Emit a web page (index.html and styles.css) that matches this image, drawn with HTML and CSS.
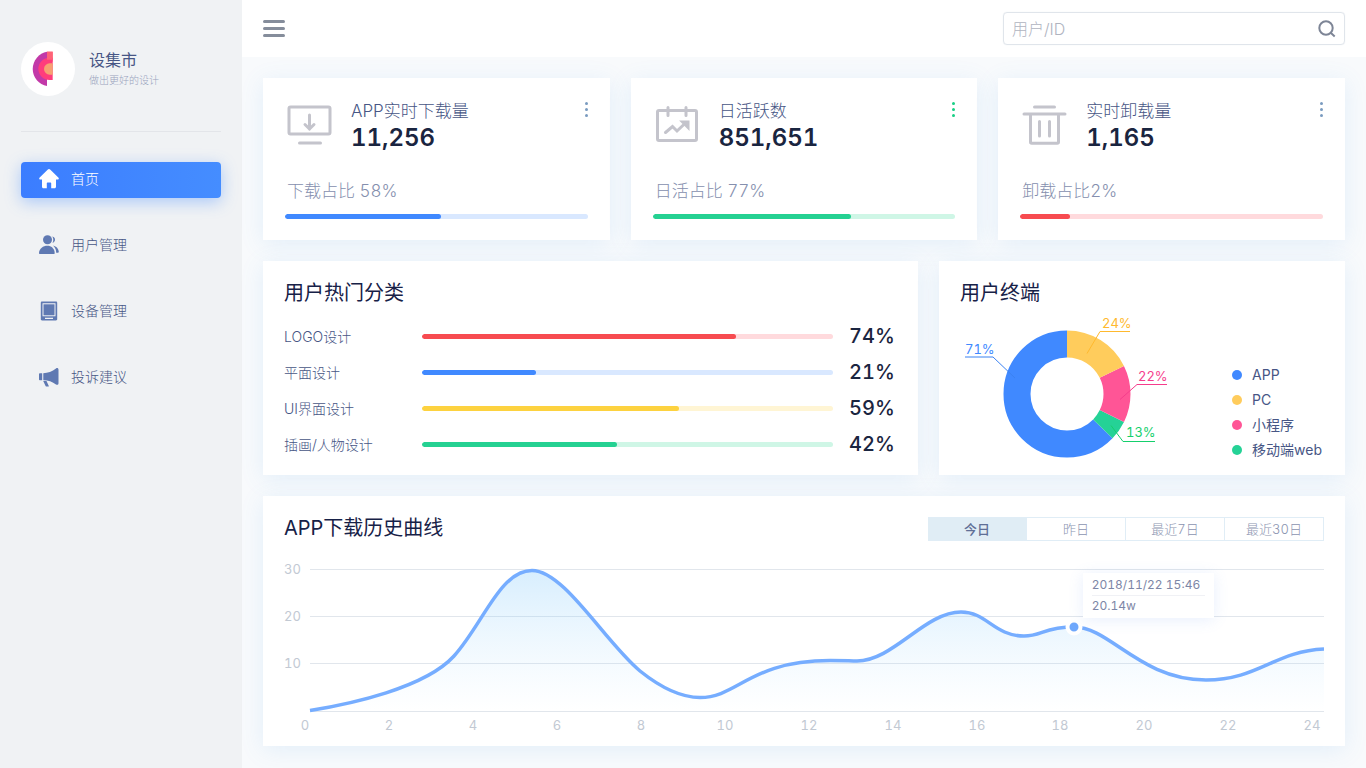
FILE: index.html
```html
<!DOCTYPE html>
<html lang="zh-CN">
<head>
<meta charset="utf-8">
<title>设集市</title>
<link rel="stylesheet" href="styles.css">
</head>
<body>
<div class="app">
  <aside class="sidebar">
    <div class="profile">
      <span class="avatar">
        <svg width="54" height="54" viewBox="0 0 54 54" aria-hidden="true">
          <path d="M26 9.700C18 11 11.700 18.500 11.700 27S18 42.700 26 44z" fill="#c239a8"/>
          <path d="M26 9.700h5.700v10H26z" fill="#ff6377"/>
          <path d="M31.700 15.700H28.500a11.150 11.150 0 0 0 0 22.300h3.200z" fill="#ff3d7c"/>
          <path d="M26 9.700h5.700v8H26z" fill="#ff6377"/>
          <path d="M31.700 21.300h-3a5.700 5.700 0 0 0 0 11.400h3z" fill="#f7a072"/>
        </svg>
      </span>
      <div>
        <h1 class="profile-name">设集市</h1>
        <p class="profile-note">做出更好的设计</p>
      </div>
    </div>
    <nav class="nav">
      <a class="nav-item nav-item-active" href="#home">
        <svg class="nav-icon" viewBox="0 0 20 20" aria-hidden="true"><path d="M8.600.8a2 2 0 0 1 2.800 0l7.900 7.600c.9.900.5 2.100-.6 2.100H17v7.200c0 .9-.6 1.500-1.500 1.500h-3.300v-4.700c0-.6-.4-1-1-1H8.800c-.6 0-1 .4-1 1v4.700H4.500c-.9 0-1.500-.6-1.500-1.500v-7.200H1.300c-1.100 0-1.500-1.200-.6-2.100z"/></svg>
        首页
      </a>
      <a class="nav-item" href="#users">
        <svg class="nav-icon" viewBox="0 0 20 20" aria-hidden="true"><circle cx="8.500" cy="4.800" r="4.500"/><path d="M1 19c-.7 0-1-.5-1-1.100C.3 13.500 4 10.800 8.500 10.800c3.500 0 7 2.600 7.200 7.100 0 .7-.3 1.100-1 1.100z"/><path d="M13.300 1.500c1.900.3 2.900 1.800 2.700 3.600-.2 1.500-1.100 2.500-2.500 2.800 1.100-1.900 1.100-4.300-.2-6.400zM14 10.500c3.300.8 5.700 3.300 5.800 6.300 0 .6-.3.900-.9.900h-1.700c0-2.900-1.100-5.400-3.200-7.200z"/></svg>
        用户管理
      </a>
      <a class="nav-item" href="#devices">
        <svg class="nav-icon" viewBox="0 0 20 20" aria-hidden="true"><path fill-rule="evenodd" d="M3 .5h14c.7 0 1.200.5 1.200 1.200v16.600c0 .7-.5 1.200-1.200 1.200H3c-.7 0-1.200-.5-1.200-1.200V1.700C1.800 1 2.300.5 3 .5zM3.500 2.300v13h13v-13zM6 16.800v1.300h8v-1.300z"/><path d="M4.500 3.300h11v11h-11z"/></svg>
        设备管理
      </a>
      <a class="nav-item" href="#feedback">
        <svg class="nav-icon" viewBox="0 0 20 20" aria-hidden="true"><path d="M.8 6.300h2.400v6.900H.8c-.4 0-.8-.4-.8-.8V7.100c0-.4.400-.8.800-.8zM4.300 6.200c4.500-.2 8.900-1.500 12.700-4.700 1.100-.9 2.500-.3 2.500 1.200v13.500c0 1.500-1.400 2-2.500 1.200-3.500-2.800-7.800-4.100-12.700-4.200zM4.200 14.100h3.300l2.300 4.800c.1.300 0 .6-.4.600H7.600c-.5 0-.8-.2-1-.6z"/></svg>
        投诉建议
      </a>
    </nav>
  </aside>

  <div class="page">
    <header class="topbar">
      <button class="menu-button" type="button" aria-label="菜单"><span></span><span></span><span></span></button>
      <form class="search">
        <input class="search-input" type="search" placeholder="用户/ID" aria-label="用户/ID">
        <button class="search-button" type="submit" aria-label="搜索">
          <svg width="18" height="18" viewBox="0 0 18 18" fill="none" stroke="#7d8596" stroke-width="2" aria-hidden="true"><circle cx="8" cy="8" r="6.700"/><path d="M12.700 12.700l4 3.800"/></svg>
        </button>
      </form>
    </header>

    <main class="content">
      <section class="stats">
        <article class="card stat stat-blue">
          <div class="stat-head">
            <svg class="stat-icon" viewBox="0 0 46 44" aria-hidden="true"><rect x="2" y="5" width="41" height="27" rx="1.500"/><path d="M22.500 13v14M18 22.500l4.500 4.500 4.500-4.500M12.500 41h21"/></svg>
            <div class="stat-text"><h2 class="stat-title">APP实时下载量</h2><p class="stat-value">11,256</p></div>
            <button class="more" type="button" aria-label="更多"><i></i><i></i><i></i></button>
          </div>
          <p class="stat-share">下载占比 58%</p>
          <div class="bar"><div class="bar-fill" style="width:51.5%"></div></div>
        </article>
        <article class="card stat stat-green">
          <div class="stat-head">
            <svg class="stat-icon" viewBox="0 0 46 44" aria-hidden="true"><rect x="2.500" y="8.500" width="39" height="30" rx="1.500"/><path d="M13 5.500v8M31 5.500v8M10.500 30.500l7-6 4.500 4.500 9-8.500"/><path d="M26.500 19.500h7v7z" fill="#c4c4cc" stroke-width="2"/></svg>
            <div class="stat-text"><h2 class="stat-title">日活跃数</h2><p class="stat-value">851,651</p></div>
            <button class="more more-green" type="button" aria-label="更多"><i></i><i></i><i></i></button>
          </div>
          <p class="stat-share">日活占比 77%</p>
          <div class="bar"><div class="bar-fill" style="width:65.6%"></div></div>
        </article>
        <article class="card stat stat-red">
          <div class="stat-head">
            <svg class="stat-icon" viewBox="0 0 46 44" aria-hidden="true"><path d="M12.500 5h20M2 12h41M8.500 12v28c0 .8.400 1.200 1.200 1.200h25.600c.8 0 1.200-.4 1.200-1.200V12M17.500 19.500v14.500M27.500 19.500v14.500"/></svg>
            <div class="stat-text"><h2 class="stat-title">实时卸载量</h2><p class="stat-value">1,165</p></div>
            <button class="more" type="button" aria-label="更多"><i></i><i></i><i></i></button>
          </div>
          <p class="stat-share">卸载占比2%</p>
          <div class="bar"><div class="bar-fill" style="width:16.4%"></div></div>
        </article>
      </section>

      <section class="middle">
        <article class="card panel">
          <h2 class="card-title">用户热门分类</h2>
          <ul class="ranks">
            <li class="rank rank-red"><span>LOGO设计</span><div class="bar"><div class="bar-fill" style="width:76.3%"></div></div><b>74%</b></li>
            <li class="rank rank-blue"><span>平面设计</span><div class="bar"><div class="bar-fill" style="width:27.7%"></div></div><b>21%</b></li>
            <li class="rank rank-yellow"><span>UI界面设计</span><div class="bar"><div class="bar-fill" style="width:62.5%"></div></div><b>59%</b></li>
            <li class="rank rank-green"><span>插画/人物设计</span><div class="bar"><div class="bar-fill" style="width:47.5%"></div></div><b>42%</b></li>
          </ul>
        </article>
        <article class="card panel">
          <h2 class="card-title">用户终端</h2>
          <div class="terminals">
            <svg class="donut" viewBox="0 0 210 150" role="img" aria-label="用户终端">
              <g class="donut-ring" transform="rotate(-90 107 82)">
                <circle cx="107" cy="82" r="50" pathLength="360" stroke="#4089ff" stroke-dasharray="225.800 360" stroke-dashoffset="-134.200"/>
                <circle cx="107" cy="82" r="50" pathLength="360" stroke="#25d296" stroke-dasharray="18 360" stroke-dashoffset="-116.200"/>
                <circle cx="107" cy="82" r="50" pathLength="360" stroke="#ff5596" stroke-dasharray="52.500 360" stroke-dashoffset="-63.700"/>
                <circle cx="107" cy="82" r="50" pathLength="360" stroke="#ffcc5c" stroke-dasharray="63.700 360"/>
              </g>
              <g class="donut-lead">
                <path d="M5 45h28l22 21" stroke="#3b82f2"/>
                <path d="M170 19.500h-30l-13 22" stroke="#ffb92e"/>
                <path d="M207 72.500h-30l-17 15" stroke="#f53d8c"/>
                <path d="M195 129.500h-32l-12-16" stroke="#15cf6c"/>
              </g>
              <g class="donut-label">
                <text x="5" y="42" fill="#4089ff">71%</text>
                <text x="142" y="16" fill="#ffb92e">24%</text>
                <text x="178" y="69" fill="#f53d8c">22%</text>
                <text x="166" y="125" fill="#15cf6c">13%</text>
              </g>
            </svg>
            <ul class="legend">
              <li class="legend-blue">APP</li>
              <li class="legend-yellow">PC</li>
              <li class="legend-pink">小程序</li>
              <li class="legend-green">移动端web</li>
            </ul>
          </div>
        </article>
      </section>

      <section class="card panel history">
        <div class="history-head">
          <h2 class="card-title">APP下载历史曲线</h2>
          <div class="tabs">
            <button class="tab tab-active" type="button">今日</button>
            <button class="tab" type="button">昨日</button>
            <button class="tab" type="button">最近7日</button>
            <button class="tab" type="button">最近30日</button>
          </div>
        </div>
        <div class="chart">
          <svg class="chart-svg" viewBox="0 0 1040 180" role="img" aria-label="APP下载历史曲线">
            <defs><linearGradient id="area" x1="0" y1="0" x2="0" y2="1"><stop offset="0" stop-color="#7cc6fb" stop-opacity=".3"/><stop offset="1" stop-color="#a9dbfc" stop-opacity="0"/></linearGradient></defs>
            <path class="grid" d="M26 9.500h1014M26 56.500h1014M26 103.500h1014M26 151.500h1014"/>
            <path fill="url(#area)" d="M26 150.500C66 144 141 128 170 96S216 10.500 248 10.500 321 82 356 111C376 127 396 137.500 416 137.500 454 137.500 466 100.500 546 100.500 561 100.500 566 101 573 101 609 101 641 52 677 52 703 52 710 76 740 76 758 76 760 67 790 67 826 67 856 120 922 120 974 120 991 91 1040 89V151H26z"/>
            <path class="curve" d="M26 150.500C66 144 141 128 170 96S216 10.500 248 10.500 321 82 356 111C376 127 396 137.500 416 137.500 454 137.500 466 100.500 546 100.500 561 100.500 566 101 573 101 609 101 641 52 677 52 703 52 710 76 740 76 758 76 760 67 790 67 826 67 856 120 922 120 974 120 991 91 1040 89"/>
            <circle cx="790" cy="67" r="6.500" fill="#6fa8fc" stroke="#fff" stroke-width="4"/>
            <g class="axis">
              <text x="0" y="14">30</text><text x="0" y="61">20</text><text x="0" y="108">10</text>
            </g>
            <g class="axis axis-x">
              <text x="21" y="170">0</text><text x="105" y="170">2</text><text x="189" y="170">4</text><text x="273" y="170">6</text><text x="357" y="170">8</text><text x="441" y="170">10</text><text x="525" y="170">12</text><text x="609" y="170">14</text><text x="693" y="170">16</text><text x="776" y="170">18</text><text x="860" y="170">20</text><text x="944" y="170">22</text><text x="1028" y="170">24</text>
            </g>
          </svg>
          <div class="tooltip"><p class="tooltip-time">2018/11/22 15:46</p><p>20.14w</p></div>
        </div>
      </section>
    </main>
  </div>
</div>
</body>
</html>
```
FILE: styles.css
```css
* { box-sizing: border-box; margin: 0; padding: 0; }
body { font-family: Inter, "Noto Sans CJK SC", sans-serif; font-weight: 300; font-variant-numeric: tabular-nums; color: #475685; background: #f8fafc; }
h1, h2 { font-weight: inherit; }
ul { list-style: none; }
a { text-decoration: none; color: inherit; }
button, input { font: inherit; color: inherit; border: 0; background: none; }
button { cursor: pointer; }

.app { display: flex; min-height: 100vh; }

.sidebar { flex: none; width: 242px; padding: 42px 21px; background: #f0f2f4; }
.profile { display: flex; align-items: center; gap: 14px; padding-bottom: 35px; border-bottom: 1px solid #e3e5e9; }
.avatar { width: 54px; height: 54px; border-radius: 50%; background: #fff; }
.avatar svg { display: block; }
.profile-name { font-size: 16px; line-height: 22px; font-weight: 400; }
.profile-note { font-size: 10px; line-height: 18px; color: #99a3bd; }
.nav { display: flex; flex-direction: column; gap: 30px; margin-top: 30px; }
.nav-item { display: flex; align-items: center; gap: 12px; height: 36px; padding: 0 18px 2px; border-radius: 4px; font-size: 14px; line-height: 20px; }
.nav-item-active { color: #fff; background: linear-gradient(90deg, #3b7dff, #458dff); box-shadow: 0 4px 16px rgba(64, 137, 255, .4); }
.nav-icon { width: 20px; height: 20px; fill: #5f79b2; }
.nav-item-active .nav-icon { fill: #fff; }

.page { flex: 1; min-width: 0; }
.topbar { display: flex; justify-content: space-between; align-items: center; height: 57px; padding: 0 21px; background: #fff; }
.menu-button { display: flex; flex-direction: column; gap: 4px; width: 22px; }
.menu-button span { height: 3px; border-radius: 2px; background: #858d9b; }
.search { display: flex; align-items: center; width: 342px; height: 33px; border: 1px solid #e0e5eb; border-radius: 4px; box-shadow: 0 0 1px #e0e5eb; }
.search-input { flex: 1; min-width: 0; padding: 0 8px; font-size: 16px; outline: 0; }
.search-input::placeholder { color: #b0b4bf; opacity: 1; }
.search-button { display: flex; padding: 0 8px; }

.content { display: grid; gap: 21px; padding: 21px; }
.card { background: #fff; box-shadow: 0 4px 22px rgba(85, 160, 235, .13); }
.stats { display: grid; grid-template-columns: repeat(3, 1fr); gap: 21px; }
.stat { padding: 21px 22px; }
.stat-head { display: flex; align-items: flex-start; }
.stat-icon { flex: none; width: 46px; height: 44px; margin: 3px 0 0 2px; fill: none; stroke: #c4c4cc; stroke-width: 3; stroke-linecap: round; }
.stat-text { flex: 1; padding-left: 18px; }
.stat-title { font-size: 17px; line-height: 24px; }
.stat-value { font-size: 24px; line-height: 30px; font-weight: 600; color: #1a2540; }
.more { display: flex; flex-direction: column; gap: 3px; padding-top: 3px; }
.more i { width: 3px; height: 3px; border-radius: 50%; background: #7a9bc0; }
.more-green i { background: #18cf85; }
.stat-share { margin-top: 25px; padding-left: 2px; font-size: 17px; line-height: 26px; color: #858fae; }
.bar { height: 5px; border-radius: 3px; overflow: hidden; }
.bar-fill { height: 5px; border-radius: 3px; }
.stat .bar { margin-top: 10px; }
.stat-blue .bar, .rank-blue .bar { background: #d9e8ff; }
.stat-blue .bar-fill, .rank-blue .bar-fill { background: #4089ff; }
.stat-green .bar, .rank-green .bar { background: #cff6e6; }
.stat-green .bar-fill, .rank-green .bar-fill { background: #25d192; }
.stat-red .bar, .rank-red .bar { background: #ffdadd; }
.stat-red .bar-fill, .rank-red .bar-fill { background: #f74b50; }
.rank-yellow .bar { background: #fff5d4; }
.rank-yellow .bar-fill { background: #fdd23f; }

.middle { display: grid; grid-template-columns: 655fr 406fr; gap: 21px; }
.panel { padding: 16px 21px 13px; }
.card-title { font-size: 20px; line-height: 32px; font-weight: 400; color: #172147; }
.ranks { padding: 9px 4px 0 0; }
.rank { display: grid; grid-template-columns: 138px 1fr 60px; align-items: center; height: 36px; font-size: 14px; }
.rank b { padding-left: 16px; font-size: 20px; font-weight: 500; color: #1a2540; }
.terminals { display: flex; justify-content: space-between; align-items: flex-end; padding-top: 3px; }
.donut { width: 210px; height: 150px; }
.donut-ring { fill: none; stroke-width: 27; }
.donut-lead { fill: none; stroke-width: 1; }
.donut-label { font-size: 13px; font-weight: 400; }
.legend { padding-right: 2px; font-size: 14px; line-height: 25px; font-weight: 400; }
.legend li { display: flex; align-items: center; gap: 10px; }
.legend li::before { content: ""; width: 10px; height: 10px; border-radius: 50%; background: currentColor; }
.legend-blue::before { color: #4089ff; }
.legend-yellow::before { color: #ffcc5c; }
.legend-pink::before { color: #ff5596; }
.legend-green::before { color: #25d296; }

.history { padding-bottom: 6px; }
.history-head { display: flex; justify-content: space-between; align-items: center; }
.tabs { display: flex; margin-top: 2px; }
.tab { width: 99px; height: 24px; border: 1px solid #e0edf6; border-left-width: 0; font-size: 13px; line-height: 20px; color: #8b94b0; }
.tab-active { background: #e0edf5; color: #5f6f96; font-weight: 500; }
.chart { position: relative; margin-top: 16px; }
.chart-svg { display: block; width: 100%; }
.grid { stroke: #e1e6ec; }
.curve { fill: none; stroke: #76adff; stroke-width: 3.500; }
.axis { font-size: 13px; font-weight: 400; fill: #c2c9d3; }
.axis-x { text-anchor: middle; }
.tooltip { position: absolute; left: 76.8%; top: 13px; width: 131px; padding: 2px 9px; background: #fff; box-shadow: 0 2px 14px rgba(95, 140, 240, .14); font-size: 12px; line-height: 20px; font-weight: 400; color: #7d86a6; }
.tooltip-time { border-bottom: 1px solid #f0f1f5; white-space: nowrap; }
```
